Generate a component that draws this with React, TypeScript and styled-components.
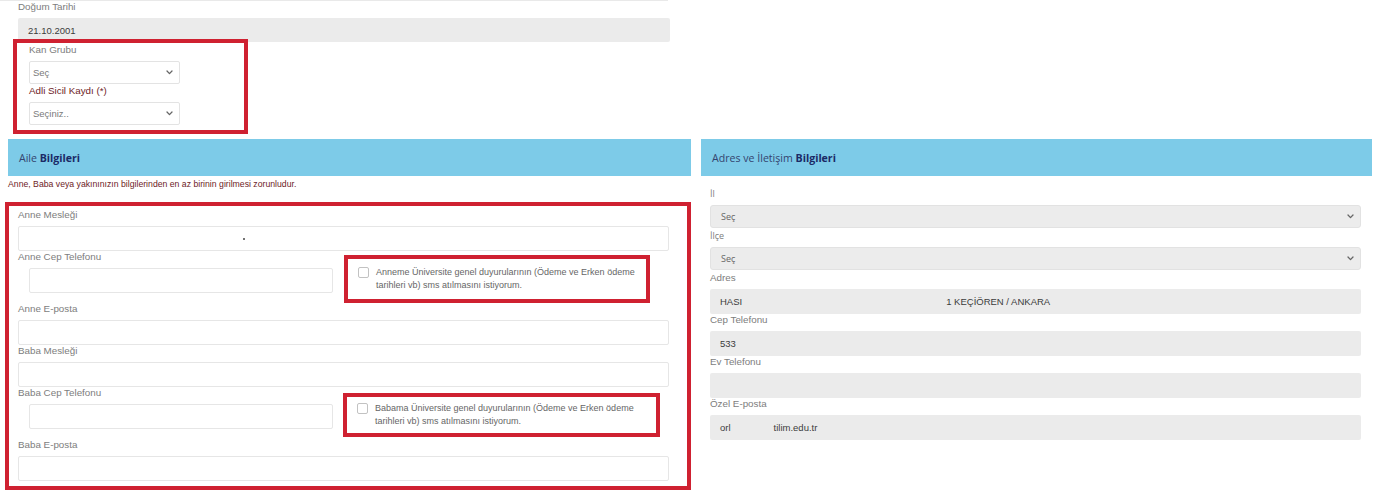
import React from "react";
import styled, { createGlobalStyle, css } from "styled-components";

const GlobalStyle = createGlobalStyle`
  html, body {
    margin: 0;
    padding: 0;
    background: #ffffff;
  }
  body {
    font-family: "Liberation Sans", Arial, sans-serif;
    color: #333333;
  }
  * { box-sizing: border-box; }
`;

const RED = "#cf2131";

const Page = styled.div`
  width: 1385px;
  height: 493px;
  overflow: hidden;
  background: #ffffff;
`;

/* ---------- top block (birth date + blood group) ---------- */

const TopSection = styled.section`
  width: 670px;
`;

const TopStrip = styled.div`
  height: 1px;
  width: 668px;
  background: #e9e9e9;
`;

const Field = styled.div<{ $indent?: number }>`
  padding-left: ${(p) => p.$indent ?? 0}px;
`;

const Label = styled.label<{ $tone?: "muted" | "alert"; $open?: boolean }>`
  display: block;
  font-size: 9.8px;
  line-height: 12px;
  margin-bottom: 5px;
  white-space: nowrap;
  color: ${(p) => (p.$tone === "alert" ? "#6e1c1f" : "#7d7d7d")};
  ${(p) =>
    p.$open &&
    css`
      font-family: "Open Sans", "Liberation Sans", sans-serif;
      font-size: 9px;
    `}
`;

const FilledInput = styled.div<{ $h?: number }>`
  height: ${(p) => p.$h ?? 25}px;
  background: #ebebeb;
  border-radius: 2px;
  display: flex;
  align-items: center;
  padding-left: 10px;
  font-size: 9.5px;
  color: #3c3c3c;
  white-space: nowrap;
`;

const ValuePart = styled.span<{ $gap?: number }>`
  padding-left: ${(p) => p.$gap ?? 0}px;
`;

const EmptyInput = styled.div<{ $indent?: number }>`
  height: 25px;
  margin-left: ${(p) => p.$indent ?? 0}px;
  background: #ffffff;
  border: 1px solid #e6e6e6;
  border-radius: 2px;
  position: relative;
`;

/* annotation frame drawn around a group of fields */
const Frame = styled.div<{
  $w: number;
  $h?: number;
  $ml?: number;
  $mt?: number;
  $pad?: string;
}>`
  width: ${(p) => p.$w}px;
  ${(p) => (p.$h ? `height: ${p.$h}px;` : "")}
  margin-left: ${(p) => p.$ml ?? 0}px;
  margin-top: ${(p) => p.$mt ?? 0}px;
  border: 4px solid ${RED};
  padding: ${(p) => p.$pad ?? "0"};
  background: #ffffff;
  position: relative;
`;

const SmallSelect = styled.div`
  width: 151px;
  height: 23px;
  margin-bottom: 1px;
  border: 1px solid #e3e3e3;
  border-radius: 2px;
  background: #ffffff;
  display: flex;
  align-items: center;
  justify-content: space-between;
  padding: 0 6px 0 3px;
  font-size: 9.5px;
  color: #7a7a7a;
`;

const WideSelect = styled.div`
  height: 23px;
  margin-bottom: 2px;
  border: 1px solid #e2e2e2;
  border-radius: 3px;
  background: #ececec;
  display: flex;
  align-items: center;
  justify-content: space-between;
  padding: 0 6px 0 10px;
  font-family: "Open Sans", "Liberation Sans", sans-serif;
  font-size: 9px;
  color: #666666;
`;

const Chevron = () => (
  <svg width="7" height="5" viewBox="0 0 7 5" aria-hidden="true">
    <polyline
      points="1,1 3.5,3.6 6,1"
      fill="none"
      stroke="#666"
      strokeWidth="1.3"
      strokeLinecap="round"
      strokeLinejoin="round"
    />
  </svg>
);

/* ---------- two column part ---------- */

const Columns = styled.div`
  display: grid;
  grid-template-columns: 691px 671px;
  column-gap: 10px;
  margin-top: 5px;
`;

const Column = styled.div``;

const SectionHeader = styled.div<{ $ml?: number }>`
  height: 37px;
  margin-left: ${(p) => p.$ml ?? 0}px;
  background: #7dcbe8;
  display: flex;
  align-items: center;
  padding-left: 11px;
  font-family: "Open Sans", "Liberation Sans", sans-serif;
  font-size: 10.6px;
  color: #34446f;
  white-space: nowrap;
`;

const Strong = styled.b`
  font-weight: 700;
  color: #1b2a66;
`;

const Notice = styled.p`
  margin: 3px 0 13px 8px;
  font-size: 8.7px;
  line-height: 10px;
  color: #6e1c1f;
  white-space: nowrap;
`;

const PhoneRow = styled.div`
  display: grid;
  grid-template-columns: 315px 1fr;
  min-height: 52px;
  align-items: start;
`;

const Consent = styled.div<{ $pt: number }>`
  display: flex;
  align-items: flex-start;
  gap: 7px;
  padding: ${(p) => p.$pt}px 0 0 10px;
`;

const CheckBox = styled.span`
  flex: none;
  width: 11px;
  height: 11px;
  margin-top: 1px;
  border: 1px solid #c2c2c2;
  border-radius: 2px;
  background: #ffffff;
`;

const ConsentText = styled.span`
  font-size: 9px;
  line-height: 13px;
  color: #666666;
  white-space: nowrap;
`;

const Dot = styled.span`
  position: absolute;
  left: 224px;
  top: 11px;
  width: 2px;
  height: 2px;
  border-radius: 50%;
  background: #444;
`;

const SideBody = styled.div`
  padding: 12px 11px 0 9px;
`;

type ParentProps = {
  who: string;
  consentWho: string;
  frameW: number;
  frameH: number;
  frameMl: number;
  frameMt: number;
  consentPt: number;
  withDot?: boolean;
};

const ParentFields = ({
  who,
  consentWho,
  frameW,
  frameH,
  frameMl,
  frameMt,
  consentPt,
  withDot,
}: ParentProps) => (
  <>
    <Label>{who} Mesleği</Label>
    <EmptyInput>{withDot && <Dot />}</EmptyInput>
    <PhoneRow>
      <div>
        <Label>{who} Cep Telefonu</Label>
        <EmptyInput $indent={11} />
      </div>
      <Frame $w={frameW} $h={frameH} $ml={frameMl} $mt={frameMt}>
        <Consent $pt={consentPt}>
          <CheckBox />
          <ConsentText>
            {consentWho} Üniversite genel duyurularının (Ödeme ve Erken ödeme
            <br />
            tarihleri vb) sms atılmasını istiyorum.
          </ConsentText>
        </Consent>
      </Frame>
    </PhoneRow>
    <Label>{who} E-posta</Label>
    <EmptyInput />
  </>
);

export default function App() {
  return (
    <Page>
      <GlobalStyle />
      <TopSection>
        <TopStrip />
        <Field $indent={18}>
          <Label>Doğum Tarihi</Label>
          <FilledInput $h={24}>21.10.2001</FilledInput>
        </Field>
        <Frame $w={235} $ml={13} $mt={-3} $pad="1px 0 4px 12px">
          <Label>Kan Grubu</Label>
          <SmallSelect>
            <span>Seç</span>
            <Chevron />
          </SmallSelect>
          <Label $tone="alert">Adli Sicil Kaydı (*)</Label>
          <SmallSelect>
            <span>Seçiniz..</span>
            <Chevron />
          </SmallSelect>
        </Frame>
      </TopSection>

      <Columns>
        <Column>
          <SectionHeader $ml={8}>
            Aile&nbsp;<Strong>Bilgileri</Strong>
          </SectionHeader>
          <Notice>
            Anne, Baba veya yakınınızın bilgilerinden en az birinin girilmesi
            zorunludur.
          </Notice>
          <Frame $w={686} $ml={5} $pad="3px 18px 5px 9px">
            <ParentFields
              who="Anne"
              consentWho="Anneme"
              frameW={306}
              frameH={48}
              frameMl={11}
              frameMt={4}
              consentPt={7}
              withDot
            />
            <Label>Baba Mesleği</Label>
            <EmptyInput />
            <PhoneRow>
              <div>
                <Label>Baba Cep Telefonu</Label>
                <EmptyInput $indent={11} />
              </div>
              <Frame $w={317} $h={44} $ml={10} $mt={6}>
                <Consent $pt={5}>
                  <CheckBox />
                  <ConsentText>
                    Babama Üniversite genel duyurularının (Ödeme ve Erken ödeme
                    <br />
                    tarihleri vb) sms atılmasını istiyorum.
                  </ConsentText>
                </Consent>
              </Frame>
            </PhoneRow>
            <Label>Baba E-posta</Label>
            <EmptyInput />
          </Frame>
        </Column>

        <Column>
          <SectionHeader>
            Adres ve İletişim&nbsp;<Strong>Bilgileri</Strong>
          </SectionHeader>
          <SideBody>
            <Label $open>İl</Label>
            <WideSelect>
              <span>Seç</span>
              <Chevron />
            </WideSelect>
            <Label $open>İlçe</Label>
            <WideSelect>
              <span>Seç</span>
              <Chevron />
            </WideSelect>
            <Label>Adres</Label>
            <FilledInput>
              <ValuePart>HASI</ValuePart>
              <ValuePart $gap={204}>1 KEÇİÖREN / ANKARA</ValuePart>
            </FilledInput>
            <Label>Cep Telefonu</Label>
            <FilledInput>533</FilledInput>
            <Label>Ev Telefonu</Label>
            <FilledInput />
            <Label>Özel E-posta</Label>
            <FilledInput>
              <ValuePart>orl</ValuePart>
              <ValuePart $gap={43}>tilim.edu.tr</ValuePart>
            </FilledInput>
          </SideBody>
        </Column>
      </Columns>
    </Page>
  );
}
